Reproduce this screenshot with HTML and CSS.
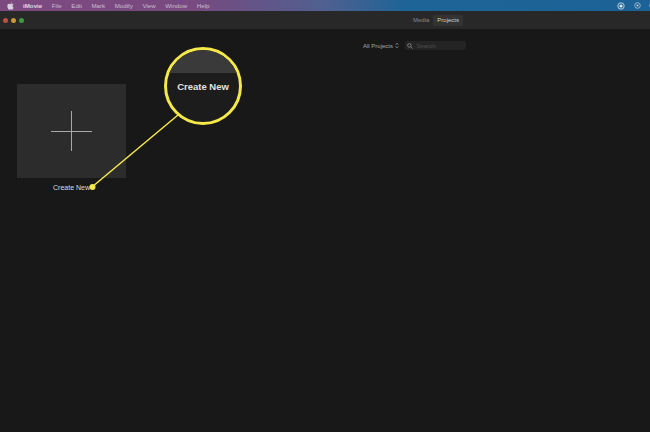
FILE: index.html
```html
<!DOCTYPE html>
<html lang="en">
<head>
<meta charset="UTF-8">
<meta name="viewport" content="width=device-width, initial-scale=1.0">
<title>iMovie Projects</title>
<link rel="stylesheet" href="styles.css">
</head>

<body>
  <div class="menubar">
    <svg class="apple" viewBox="0 0 10 12" width="7" height="8"><path d="M7 0.3C6.2 0.5 5.2 1.3 5.2 2.7 6.3 2.7 7.2 1.6 7 0.3ZM5 3.2C4.3 3.2 3.8 2.8 3 2.8 1.5 2.8 0.3 4.1 0.3 6.2 0.3 8.5 1.9 11.5 3.3 11.5 4 11.5 4.3 11 5.2 11 6.1 11 6.3 11.5 7 11.5 8.2 11.5 9.3 9.5 9.7 8.3 7.7 7.5 7.5 4.6 9.5 3.6 8.9 2.9 8 2.7 7.3 2.7 6.3 2.7 5.7 3.2 5 3.2Z" fill="#d8d0dc"/></svg>
    <span class="menu-item bold">iMovie</span>
    <span class="menu-item">File</span>
    <span class="menu-item">Edit</span>
    <span class="menu-item">Mark</span>
    <span class="menu-item">Modify</span>
    <span class="menu-item">View</span>
    <span class="menu-item">Window</span>
    <span class="menu-item">Help</span>
    <div class="status">
      <svg viewBox="0 0 10 10" width="8" height="8"><circle cx="5" cy="5" r="4" fill="none" stroke="#dfe6ee" stroke-width="1"/><circle cx="5" cy="5" r="2" fill="#dfe6ee"/></svg>
      <svg viewBox="0 0 10 10" width="7" height="7"><circle cx="5" cy="5" r="4" fill="none" stroke="#c5d2e0" stroke-width="1"/><circle cx="5" cy="5" r="1.5" fill="#c5d2e0"/></svg>
      <svg class="status-last" viewBox="0 0 10 10" width="7" height="7"><circle cx="5" cy="5" r="4" fill="none" stroke="#c5d2e0" stroke-width="1"/></svg>
    </div>
  </div>

  <div class="toolbar">
    <div class="lights">
      <i class="light red"></i>
      <i class="light yellow"></i>
      <i class="light green"></i>
    </div>
    <div class="tabs">
      <span class="tab">Media</span>
      <span class="tab active">Projects</span>
    </div>
  </div>

  <div class="content">
    <div class="filters">
      <span class="all-projects">All Projects
        <svg viewBox="0 0 6 10" width="4" height="7"><path d="M1 4 3 1.5 5 4M1 6 3 8.5 5 6" fill="none" stroke="#a8a8a8" stroke-width="1"/></svg>
      </span>
      <div class="search">
        <svg viewBox="0 0 10 10" width="6" height="6"><circle cx="4" cy="4" r="3" fill="none" stroke="#9a9a9a" stroke-width="1.2"/><path d="M6.2 6.2 9.3 9.3" stroke="#9a9a9a" stroke-width="1.2"/></svg>
        <span>Search</span>
      </div>
    </div>

    <div class="project">
      <div class="thumb">
        <svg viewBox="0 0 41 40" width="41" height="40"><path d="M20.5 0V40M0 20.5H41" stroke="#a8a8a8" stroke-width="1"/></svg>
      </div>
      <div class="project-name">Create New</div>
    </div>
  </div>

  <!-- yellow callout over the page -->
  <svg class="callout-line" viewBox="0 0 650 432" width="650" height="432">
    <path d="M92 187 178 115" stroke="#f5e94a" stroke-width="1.5"/>
    <circle cx="92.5" cy="187" r="3" fill="#f5e94a"/>
  </svg>
  <div class="callout">
    <div class="callout-top"></div>
    <div class="callout-text">Create New</div>
  </div>
</body>
</html>
```

FILE: styles.css
```css
* {
  box-sizing: border-box;
}

body {
  margin: 0;
  width: 650px;
  height: 432px;
  overflow: hidden;
  background: #181818;
  font-family: "Liberation Sans", Arial, sans-serif;
  display: flex;
  flex-direction: column;
  position: relative;
}

.menubar {
  height: 11px;
  display: flex;
  align-items: center;
  padding-left: 7px;
  background: linear-gradient(90deg, #7d4a80 0%, #774a80 30%, #4f6090 50%, #1f6496 62%, #1d6296 100%);
  color: #c9bdd0;
  font-size: 6.2px;
}

.apple {
  margin-right: 9px;
}

.menu-item {
  margin-right: 9.5px;
}

.menu-item.bold {
  font-weight: bold;
  color: #e0d8e4;
}

.status {
  margin-left: auto;
  margin-right: -6px;
  display: flex;
  align-items: center;
  gap: 9px;
}

.status-last {
  margin-left: -1px;
}

.toolbar {
  height: 18px;
  background: #282828;
  display: flex;
  align-items: center;
  padding: 0 6px 0 3px;
}

.lights {
  display: flex;
  gap: 3px;
}

.light {
  width: 5px;
  height: 5px;
  border-radius: 50%;
}

.red {
  background: #c0503f;
}

.yellow {
  background: #c9962f;
}

.green {
  background: #3d9a3c;
}

.tabs {
  display: flex;
  margin-left: 385px;
  font-size: 6px;
  color: #8a8a8a;
}

.tab {
  padding: 2px 4px;
  height: 11px;
  line-height: 7px;
}

.tab.active {
  background: #333;
  color: #d0d0d0;
  border-radius: 1px;
}

.content {
  flex: 1;
  padding-top: 11px;
  background: #181818;
}

.filters {
  display: flex;
  align-items: center;
  height: 11px;
  padding-left: 363px;
  font-size: 6px;
  color: #a8a8a8;
}

.all-projects {
  display: flex;
  align-items: center;
  gap: 1.5px;
  margin-right: 6px;
}

.search {
  width: 61px;
  height: 9px;
  background: #242424;
  border-radius: 2px;
  display: flex;
  align-items: center;
  gap: 4px;
  padding-left: 2px;
  color: #4e4e4e;
}

.project {
  width: 109px;
  margin: 33px 0 0 17px;
}

.thumb {
  height: 94px;
  background: #2c2c2c;
  display: flex;
  align-items: center;
  justify-content: center;
}

.project-name {
  margin-top: 6px;
  text-align: center;
  font-size: 7px;
  color: #dcdcdc;
}

.callout-line {
  position: absolute;
  left: 0;
  top: 0;
}

.callout {
  position: absolute;
  left: 164px;
  top: 47px;
  width: 78px;
  height: 78px;
  border: 3px solid #f5e94a;
  border-radius: 50%;
  background: #1c1c1c;
  overflow: hidden;
}

.callout-top {
  height: 23px;
  background: #3a3a3a;
}

.callout-text {
  margin-top: 8px;
  text-align: center;
  font-size: 9.5px;
  font-weight: bold;
  color: #e2e2e2;
}
```
